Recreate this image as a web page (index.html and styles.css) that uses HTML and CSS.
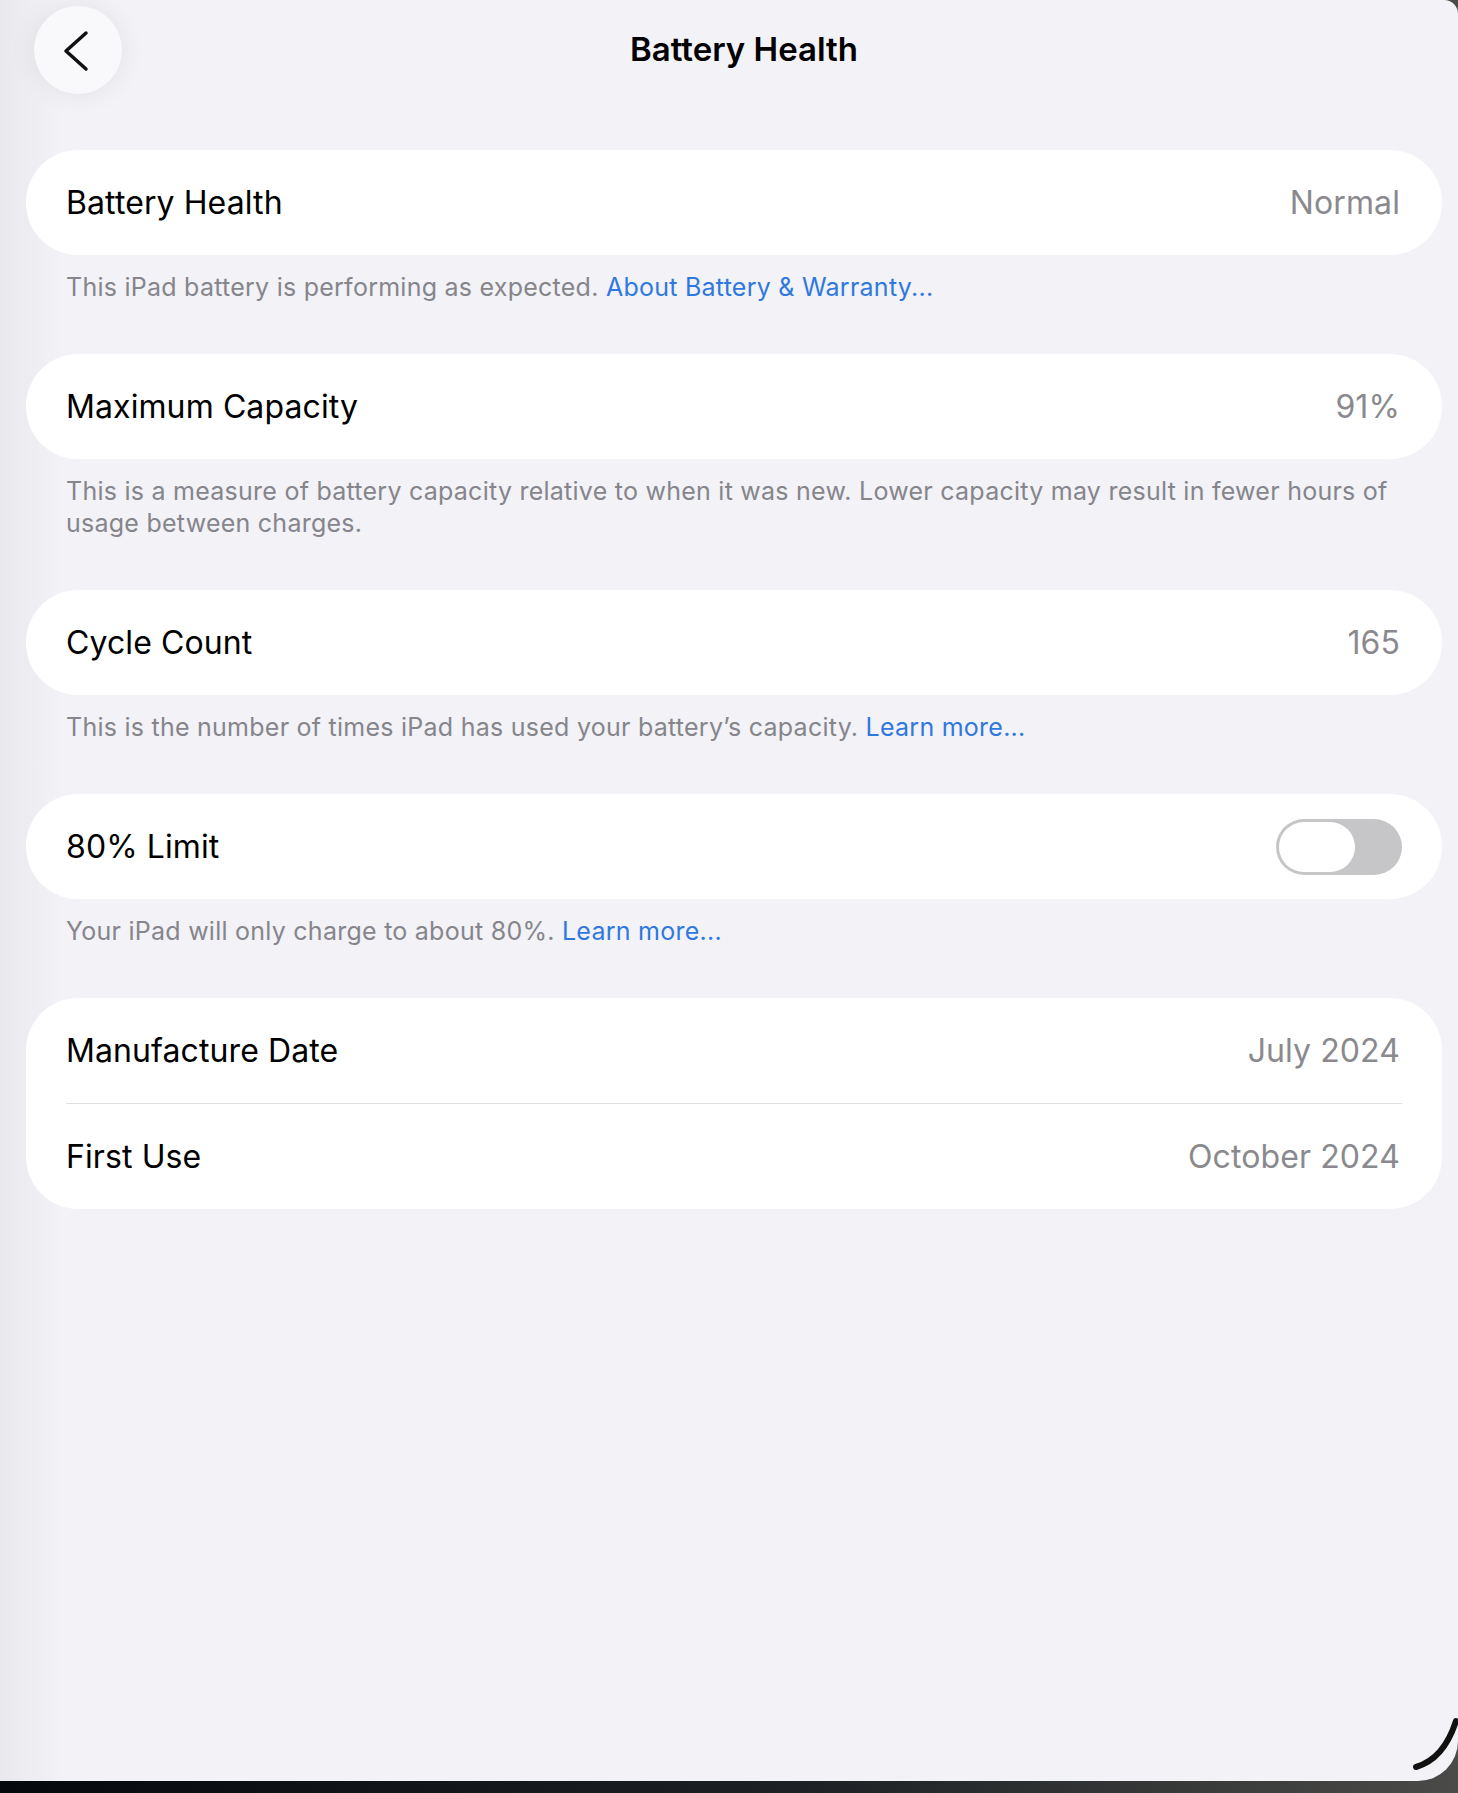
FILE: index.html
```html
<!DOCTYPE html>
<html lang="en">
<head>
<meta charset="UTF-8">
<meta name="viewport" content="width=device-width, initial-scale=1.0">
<title>Battery Health</title>
<link rel="stylesheet" href="styles.css">
</head>
<body>
<div class="screen">
    <div class="header">
        <button class="back-btn" aria-label="Back">
            <svg width="88" height="88" viewBox="0 0 88 88">
                <polyline points="52,27 32,45 52,63" fill="none" stroke="#111" stroke-width="3.5" stroke-linecap="round" stroke-linejoin="round"/>
            </svg>
        </button>
        <h1 class="title">Battery Health</h1>
        <div class="spacer"></div>
    </div>

    <div class="list">
        <div class="card">
            <div class="row">
                <span class="label">Battery Health</span>
                <span class="value">Normal</span>
            </div>
        </div>
        <p class="footer">This iPad battery is performing as expected. <a href="#">About Battery &amp; Warranty...</a></p>

        <div class="card">
            <div class="row">
                <span class="label">Maximum Capacity</span>
                <span class="value">91%</span>
            </div>
        </div>
        <p class="footer">This is a measure of battery capacity relative to when it was new. Lower capacity may result in fewer hours of usage between charges.</p>

        <div class="card">
            <div class="row">
                <span class="label">Cycle Count</span>
                <span class="value">165</span>
            </div>
        </div>
        <p class="footer">This is the number of times iPad has used your battery’s capacity. <a href="#">Learn more...</a></p>

        <div class="card">
            <div class="row">
                <span class="label">80% Limit</span>
                <span class="toggle"><span class="knob"></span></span>
            </div>
        </div>
        <p class="footer">Your iPad will only charge to about 80%. <a href="#">Learn more...</a></p>

        <div class="card">
            <div class="row">
                <span class="label">Manufacture Date</span>
                <span class="value">July 2024</span>
            </div>
            <div class="sep"></div>
            <div class="row">
                <span class="label">First Use</span>
                <span class="value">October 2024</span>
            </div>
        </div>
    </div>

    <svg class="resize-handle" width="64" height="72" viewBox="0 0 64 72">
        <path d="M22 58 Q50 50 62 12" fill="none" stroke="#111" stroke-width="6" stroke-linecap="round"/>
    </svg>
</div>
</body>
</html>
```

FILE: styles.css
```css
body {
    margin: 0;
    padding: 0;
    font-family: Inter, "Noto Sans", sans-serif;
    background: linear-gradient(to right, #05080c 0%, #1d2024 55%, #4a4b48 100%);
    height: 1793px;
    overflow: hidden;
}
.screen {
    position: relative;
    height: 1781px;
    background-color: #f2f2f7;
    background-image: linear-gradient(to right, #e8e8ed 0px, #f2f2f7 64px);
    border-bottom-right-radius: 40px;
    border-top-right-radius: 14px;
}
.header {
    display: grid;
    grid-template-columns: 88px 1fr 88px;
    align-items: center;
    padding: 6px 34px 0 34px;
}
.back-btn {
    width: 88px;
    height: 88px;
    padding: 0;
    border: none;
    border-radius: 50%;
    background-color: #f9f9fc;
    box-shadow: 0 0 28px rgba(0, 0, 0, 0.07);
    display: flex;
}
.title {
    margin: 0;
    padding-left: 30px;
    text-align: center;
    font-size: 33px;
    font-weight: 600;
    color: #000;
    position: relative;
    top: -1px;
}
.list {
    padding: 56px 16px 0 26px;
}
.card {
    background-color: #fff;
    border-radius: 52px;
}
.row {
    height: 105px;
    display: flex;
    align-items: center;
    justify-content: space-between;
    padding: 0 42px 0 40px;
}
.label {
    font-size: 32px;
    letter-spacing: 0.1px;
    color: #000;
}
.value {
    font-size: 32px;
    letter-spacing: 0.1px;
    color: #8a8a8e;
}
.sep {
    height: 1px;
    background-color: #e0e0e4;
    margin: 0 40px 0 40px;
}
.footer {
    margin: 16px 40px 51px 40px;
    font-size: 25px;
    letter-spacing: 0.25px;
    line-height: 32px;
    color: #85858b;
}
.footer a {
    color: #2f78e0;
    text-decoration: none;
}
.toggle {
    width: 126px;
    height: 56px;
    margin-right: -2px;
    border-radius: 28px;
    background-color: #c6c6c8;
    box-sizing: border-box;
    padding: 3px;
    display: flex;
}
.knob {
    width: 76px;
    height: 50px;
    border-radius: 25px;
    background-color: #fff;
}
.resize-handle {
    position: absolute;
    right: 0;
    bottom: 0;
}
```
